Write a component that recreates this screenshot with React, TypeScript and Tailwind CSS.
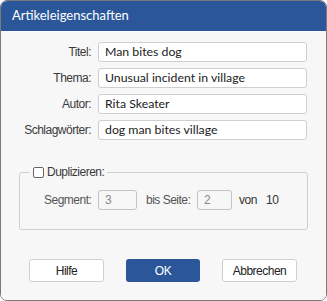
const UI = "font-['Segoe_UI','Lato',sans-serif]";
const LABEL = "font-['Liberation_Sans',Arial,sans-serif] text-[12px] tracking-[-0.5px]";

const FIELDS = [
  { label: "Titel:", value: "Man bites dog" },
  { label: "Thema:", value: "Unusual incident in village" },
  { label: "Autor:", value: "Rita Skeater" },
  { label: "Schlagwörter:", value: "dog man bites village" },
];

export default function App() {
  return (
    <div className={`w-[327px] h-[301px] bg-white ${UI}`}>
      <div className="flex h-full w-full flex-col overflow-hidden rounded-[7px] border border-[#7a7a7a]">
        {/* title bar */}
        <div className="flex h-[30px] shrink-0 items-center bg-[#2b579a] pl-[11px] text-[13px] text-white">
          Artikeleigenschaften
        </div>

        <div className="flex flex-1 flex-col bg-[#f7f7f7]">
          <div className="mt-[11px] grid grid-cols-[90px_209px] gap-x-[7px] gap-y-[6px]">
            {FIELDS.map((f) => (
              <div key={f.label} className="contents">
                <span className={`self-center text-right text-[#3a3a3a] ${LABEL}`}>
                  {f.label}
                </span>
                <div className="flex h-[20px] items-center rounded-[3px] border border-[#cfcfcf] bg-white pl-[6px] text-[12.3px] text-[#222]">
                  {f.value}
                </div>
              </div>
            ))}
          </div>

          <fieldset className={`mx-[18px] mt-[25px] h-[65px] rounded-[3px] border border-[#cfcfcf] ${LABEL}`}>
            <legend className="ml-[10px] flex h-[14px] items-center px-[3px] text-[#3a3a3a]">
              <span className="mr-[3px] inline-block h-[11px] w-[11px] rounded-[2px] border border-[#666] bg-white" />
              Duplizieren:
            </legend>
            <div className="mt-[11px] flex items-center whitespace-nowrap pl-[24px]">
              <span className="w-[54px] text-[#555]">Segment:</span>
              <div className="flex h-[20px] w-[39px] items-center rounded-[3px] border border-[#c4c4c4] pl-[6px] text-[#888]">
                3
              </div>
              <span className="ml-[9px] w-[51px] text-[#555]">bis Seite:</span>
              <div className="flex h-[20px] w-[35px] items-center rounded-[3px] border border-[#c4c4c4] pl-[6px] text-[#888]">
                2
              </div>
              <span className="ml-[7px] w-[27px] text-[#333]">von</span>
              <span className="text-[#333]">10</span>
            </div>
          </fieldset>

          <div className={`mt-[29px] flex pl-[28px] ${LABEL}`}>
            <button className="h-[23px] w-[75px] rounded-[3px] border border-[#cfcfcf] bg-white text-[#222]">
              Hilfe
            </button>
            <button className="ml-[22px] h-[23px] w-[74px] rounded-[3px] bg-[#2b579a] text-white">
              OK
            </button>
            <button className="ml-[22px] h-[23px] w-[75px] rounded-[3px] border border-[#cfcfcf] bg-white text-[#222]">
              Abbrechen
            </button>
          </div>
        </div>
      </div>
    </div>
  );
}
